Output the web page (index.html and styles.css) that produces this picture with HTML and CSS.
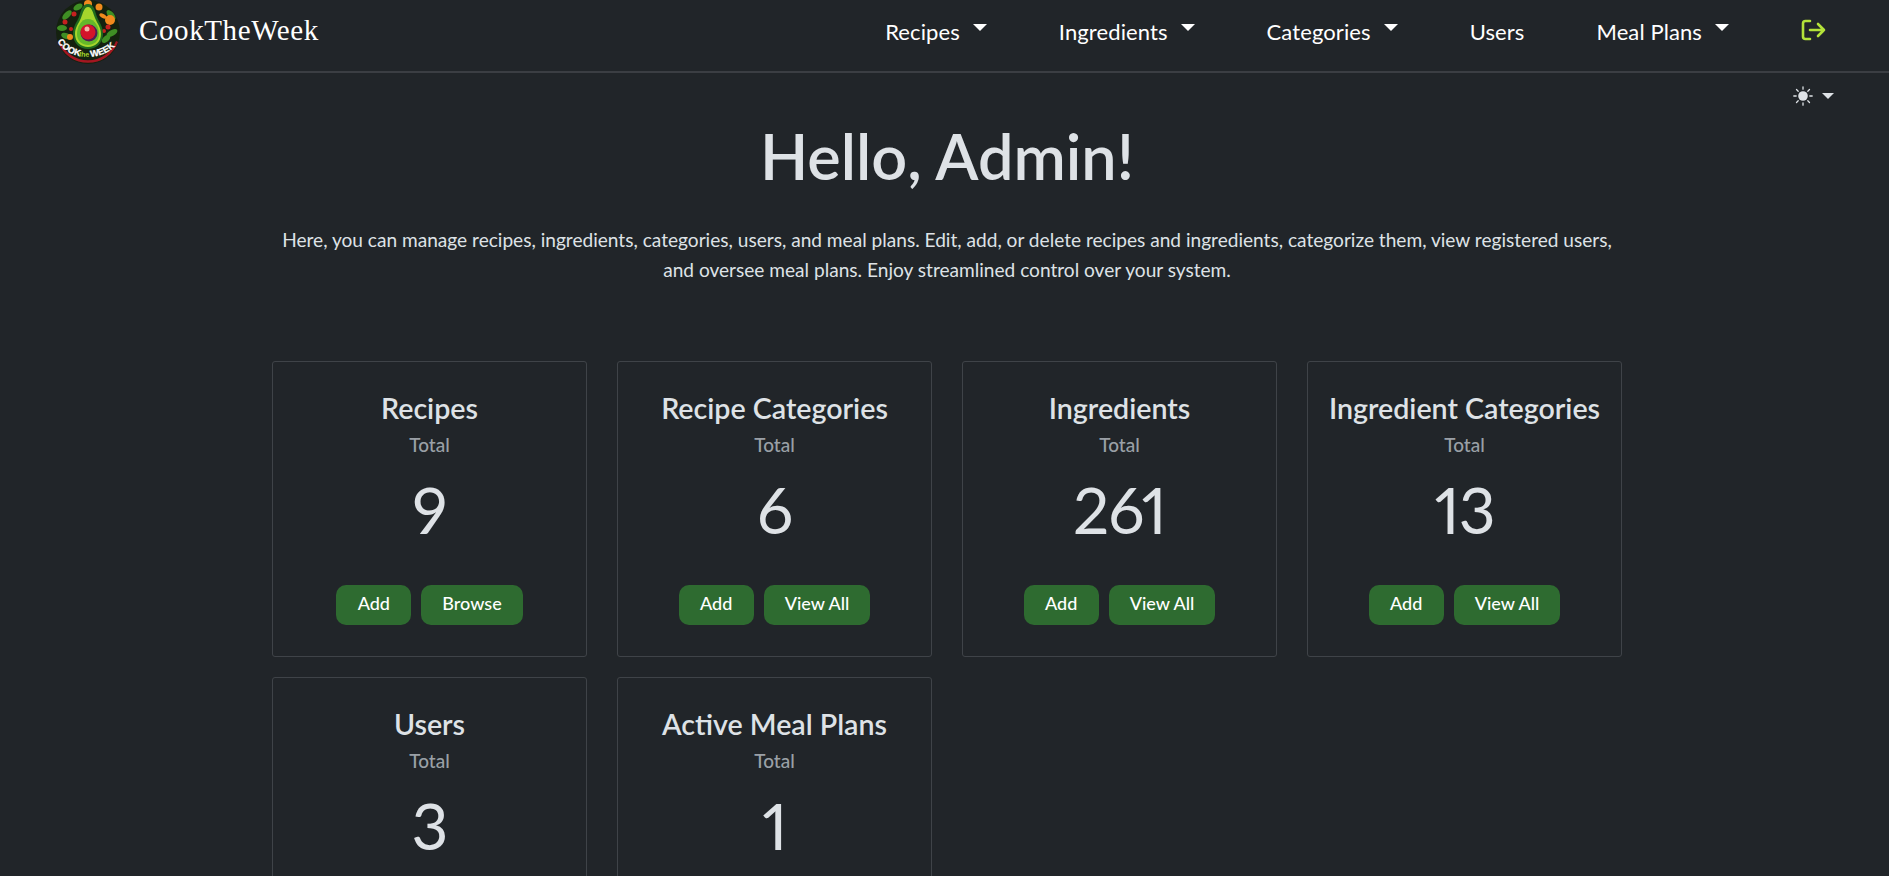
FILE: index.html
```html
<!DOCTYPE html>
<html lang="en">
<head>
<meta charset="UTF-8">
<meta name="viewport" content="width=device-width, initial-scale=1.0">
<title>CookTheWeek - Admin</title>
<link rel="stylesheet" href="styles.css">
</head>
<body>
<!-- Top navigation -->
<nav class="navbar">
    <a class="brand" href="#">
        <svg class="brand-logo" viewBox="0 0 68 66" aria-hidden="true">
            <circle cx="34" cy="32" r="32" fill="#14210f"/>
            <path d="M4 42a32 32 0 0 0 60 0l-2 -1a30 30 0 0 1 -56 0z" fill="#a31621"/>
            <g fill="#3f8f24">
                <ellipse cx="13" cy="15" rx="6" ry="3" transform="rotate(-45 13 15)"/>
                <ellipse cx="8" cy="28" rx="5" ry="3"/>
                <ellipse cx="57" cy="15" rx="6" ry="3" transform="rotate(50 57 15)"/>
                <ellipse cx="58" cy="33" rx="6" ry="3" transform="rotate(-30 58 33)"/>
                <ellipse cx="24" cy="7" rx="5" ry="3" transform="rotate(-30 24 7)"/>
                <ellipse cx="12" cy="36" rx="5" ry="3" transform="rotate(20 12 36)"/>
                <ellipse cx="52" cy="39" rx="5" ry="3" transform="rotate(-40 52 39)"/>
            </g>
            <g fill="#f08a1d">
                <circle cx="56" cy="20" r="5"/>
                <circle cx="34" cy="4" r="4"/>
                <circle cx="45" cy="7" r="3.500"/>
                <circle cx="16" cy="37" r="3"/>
                <ellipse cx="49" cy="16" rx="4" ry="2" transform="rotate(30 49 16)"/>
            </g>
            <g fill="#c5201f">
                <circle cx="20" cy="14" r="2.500"/>
                <circle cx="11" cy="22" r="2.500"/>
                <circle cx="54" cy="27" r="2.500"/>
                <circle cx="17" cy="29" r="2"/>
                <circle cx="50" cy="31" r="2"/>
            </g>
            <path d="M34 4c6 0 7 7 9 13 2 5 6 9 6 17 0 9 -7 15 -15 15s-15 -6 -15 -15c0 -8 4 -12 6 -17 2 -6 3 -13 9 -13z" fill="#1f6a1e"/>
            <path d="M34 7c4 0 5 6 7 11 2 5 6 9 6 16 0 8 -6 13 -13 13s-13 -5 -13 -13c0 -7 4 -11 6 -16 2 -5 3 -11 7 -11z" fill="#a6d62c"/>
            <path d="M34 19c7 0 11 8 11 15 0 7 -5 11 -11 11s-11 -4 -11 -11c0 -7 4 -15 11 -15z" fill="#63b82a"/>
            <circle cx="35" cy="33" r="8.500" fill="#4b1d55"/>
            <circle cx="34" cy="32" r="7.500" fill="#d3142a"/>
            <circle cx="33" cy="29" r="2.500" fill="#f7b4a8"/>
            <path id="logoArc" d="M3 41a34 27 0 0 0 62 0" fill="none"/>
            <text class="logo-word"><textPath href="#logoArc" startOffset="1">COOK</textPath></text>
            <text class="logo-word logo-the"><textPath href="#logoArc" startOffset="27">the</textPath></text>
            <text class="logo-word"><textPath href="#logoArc" startOffset="39">WEEK</textPath></text>
        </svg>
        <span class="brand-name">CookTheWeek</span>
    </a>
    <ul class="nav-links">
        <li><a class="nav-link caret" href="#">Recipes</a></li>
        <li><a class="nav-link caret" href="#">Ingredients</a></li>
        <li><a class="nav-link caret" href="#">Categories</a></li>
        <li><a class="nav-link" href="#">Users</a></li>
        <li><a class="nav-link caret" href="#">Meal Plans</a></li>
        <li>
            <a class="logout" href="#" aria-label="Log out">
                <svg viewBox="0 0 25 22" width="25" height="22" fill="none" stroke="#b4e23a" stroke-width="2.600" stroke-linecap="round" stroke-linejoin="round">
                    <path d="M9 2H4.500A2.500 2.500 0 0 0 2 4.500V17.500A2.500 2.500 0 0 0 4.500 20H9"/>
                    <path d="M9 11H23M17 5l6 6-6 6"/>
                </svg>
            </a>
        </li>
    </ul>
</nav>

<!-- Theme switch -->
<div class="theme-row">
    <button class="theme-toggle" type="button" aria-label="Theme">
        <svg viewBox="0 0 20 20" width="20" height="20" fill="#dee2e6" stroke="#dee2e6" stroke-width="1.300" stroke-linecap="round">
            <circle cx="10" cy="10" r="4.800" stroke="none"/>
            <path d="M10 .8v2.400M10 16.800v2.400M.8 10h2.400M16.800 10h2.400M3.500 3.500l1.700 1.700M14.800 14.800l1.700 1.700M3.500 16.500l1.700-1.700M14.800 5.200l1.700-1.700"/>
        </svg>
        <span class="theme-caret"></span>
    </button>
</div>

<main class="content">
    <header class="intro">
        <h1>Hello, Admin!</h1>
        <p>Here, you can manage recipes, ingredients, categories, users, and meal plans. Edit, add, or delete recipes and ingredients, categorize them, view registered users, and oversee meal plans. Enjoy streamlined control over your system.</p>
    </header>

    <!-- Stat cards -->
    <section class="card-grid">
        <div class="card">
            <h3>Recipes</h3>
            <div class="total">Total</div>
            <div class="count">9</div>
            <div class="actions"><a class="btn" href="#">Add</a><a class="btn" href="#">Browse</a></div>
        </div>
        <div class="card">
            <h3>Recipe Categories</h3>
            <div class="total">Total</div>
            <div class="count">6</div>
            <div class="actions"><a class="btn" href="#">Add</a><a class="btn" href="#">View All</a></div>
        </div>
        <div class="card">
            <h3>Ingredients</h3>
            <div class="total">Total</div>
            <div class="count">261</div>
            <div class="actions"><a class="btn" href="#">Add</a><a class="btn" href="#">View All</a></div>
        </div>
        <div class="card">
            <h3>Ingredient Categories</h3>
            <div class="total">Total</div>
            <div class="count">13</div>
            <div class="actions"><a class="btn" href="#">Add</a><a class="btn" href="#">View All</a></div>
        </div>
        <div class="card">
            <h3>Users</h3>
            <div class="total">Total</div>
            <div class="count">3</div>
        </div>
        <div class="card">
            <h3>Active Meal Plans</h3>
            <div class="total">Total</div>
            <div class="count">1</div>
        </div>
    </section>
</main>
</body>
</html>
```

FILE: styles.css
```css
html, body {
    height: 100%;
    overflow: hidden;
}
body {
    font-family: Lato, "Open Sans", sans-serif;
    margin: 0;
    padding: 0;
    background-color: #212529;
    color: #dee2e6;
}
a {
    text-decoration: none;
    color: inherit;
}

/* navbar */
.navbar {
    display: flex;
    justify-content: space-between;
    align-items: center;
    height: 71px;
    padding: 0 63px 0 54px;
    border-bottom: 2px solid #3b3e43;
}
.brand {
    display: flex;
    align-items: center;
    gap: 17px;
    margin-bottom: 6px;
}
.brand-logo {
    width: 68px;
    height: 66px;
}
.logo-word {
    font-family: "Liberation Sans", sans-serif;
    font-size: 9px;
    font-weight: 700;
    fill: #fff;
    stroke: #fff;
    stroke-width: .3px;
}
.logo-the {
    font-size: 7px;
    fill: #a6d62c;
    stroke: none;
}
.brand-name {
    font-family: "Liberation Serif", serif;
    font-size: 29px;
    letter-spacing: .6px;
    color: #fff;
    margin-bottom: 4px;
}
.nav-links {
    display: flex;
    align-items: center;
    gap: 72px;
    list-style: none;
    margin: 0 0 8px;
    padding: 0;
}
.nav-link {
    display: inline-flex;
    align-items: center;
    font-size: 22px;
    letter-spacing: .1px;
    color: #fff;
}
.caret::after {
    content: "";
    margin: 0 0 8px 13px;
    border-top: 7px solid #fff;
    border-left: 7px solid transparent;
    border-right: 7px solid transparent;
}
.logout {
    display: block;
    height: 22px;
    margin-bottom: 4px;
}

/* theme dropdown */
.theme-row {
    display: flex;
    justify-content: flex-end;
    padding: 11px 55px 0 0;
    height: 26px;
}
.theme-toggle {
    display: flex;
    align-items: center;
    gap: 9px;
    height: 24px;
    padding: 0;
    border: 0;
    background: none;
}
.theme-caret {
    border-top: 6px solid #dee2e6;
    border-left: 6px solid transparent;
    border-right: 6px solid transparent;
}

/* main */
.content {
    width: 1350px;
    margin: 0 auto;
    padding-left: 5px;
}
.intro {
    text-align: center;
}
.intro h1 {
    margin: 0;
    padding-top: 7px;
    font-size: 63px;
    font-weight: 600;
    line-height: 77px;
}
.intro p {
    width: 1340px;
    margin: 31px auto 0;
    font-size: 19.100px;
    line-height: 30px;
}

.card-grid {
    display: grid;
    grid-template-columns: repeat(4, 315px);
    gap: 20px 30px;
    margin-top: 76px;
}
.card {
    box-sizing: border-box;
    min-height: 296px;
    padding: 29px 0 24px;
    border: 1px solid #3f4348;
    border-radius: 3px;
    text-align: center;
}
.card h3 {
    margin: 0;
    font-size: 28.600px;
    font-weight: 600;
    line-height: 34px;
}
.total {
    margin-top: 8px;
    font-size: 19px;
    font-weight: 500;
    line-height: 24px;
    color: #9aa0a6;
}
.count {
    margin-top: 14px;
    font-size: 64px;
    font-variant-numeric: proportional-nums;
    letter-spacing: -1px;
    line-height: 77px;
}
.actions {
    display: flex;
    justify-content: center;
    gap: 10px;
    margin-top: 37px;
}
.btn {
    box-sizing: border-box;
    min-width: 75px;
    height: 40px;
    padding: 0 21px;
    border-radius: 10px;
    background-color: #2e6b30;
    color: #fff;
    font-size: 18px;
    font-weight: 500;
    line-height: 36px;
}
```
